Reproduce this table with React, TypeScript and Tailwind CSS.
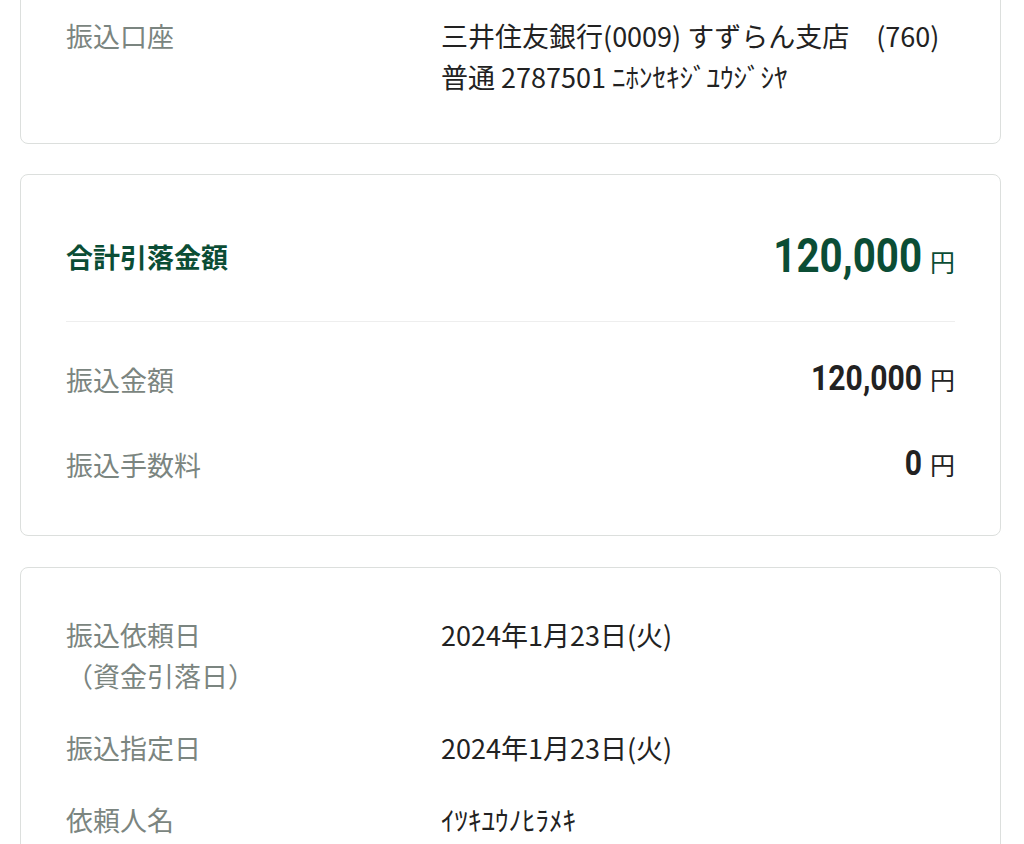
const jp = "font-['Noto_Sans_CJK_JP','Noto_Sans',sans-serif]";

function Card({ children, className = "" }: { children: React.ReactNode; className?: string }) {
  return (
    <section className={`rounded-lg border border-[#dcdfdd] bg-white px-[45px] ${className}`}>
      {children}
    </section>
  );
}

function Row({ label, children, className = "" }: { label: React.ReactNode; children: React.ReactNode; className?: string }) {
  return (
    <div className={`grid grid-cols-[375px_1fr] ${className}`}>
      <div className="text-[#7b8580]">{label}</div>
      <div className="text-[#222]">{children}</div>
    </div>
  );
}

function Amount({ value }: { value: string }) {
  return (
    <div className="flex items-baseline justify-end">
      <span className="inline-block origin-right scale-x-[0.86] font-['Roboto',sans-serif] text-[35px] font-bold leading-[41px] text-[#222]">
        {value}
      </span>
      <span className="ml-[8px] text-[25px] text-[#222]">円</span>
    </div>
  );
}

export default function App() {
  return (
    <div className={`min-h-screen bg-white pl-5 pr-[23px] text-[27px] leading-[41px] ${jp}`}>
      <div className="flex flex-col gap-[30px]">
        <Card className="-mt-[30px] pt-[44px] pb-[46px]">
          <Row label="振込口座">
            <div>三井住友銀行(0009) すずらん支店　(760)</div>
            <div>普通 2787501 ﾆﾎﾝｾｷｼﾞﾕｳｼﾞｼﾔ</div>
          </Row>
        </Card>

        <Card className="pt-[48px] pb-[50px]">
          <div className="flex h-[66px] items-center justify-between">
            <div className="font-bold text-[#0b4d35]">合計引落金額</div>
            <div className="flex items-baseline">
              <span className="inline-block origin-right scale-x-[0.84] font-['Roboto',sans-serif] text-[48px] font-bold leading-[60px] text-[#0b4d35]">
                120,000
              </span>
              <span className="ml-[8px] text-[25px] text-[#0b4d35]">円</span>
            </div>
          </div>
          <div className="mt-[32px] border-t border-[#eeeeee]" />
          <div className="mt-[36px] flex flex-col gap-[43px]">
            <div className="flex items-center justify-between">
              <div className="text-[#7b8580]">振込金額</div>
              <Amount value="120,000" />
            </div>
            <div className="flex items-center justify-between">
              <div className="text-[#7b8580]">振込手数料</div>
              <Amount value="0" />
            </div>
          </div>
        </Card>

        <Card className="mt-px pt-[46px] pb-[48px]">
          <div className="flex flex-col gap-[31px]">
            <Row label={<><div>振込依頼日</div><div>（資金引落日）</div></>}>
              2024年1月23日(火)
            </Row>
            <Row label="振込指定日">2024年1月23日(火)</Row>
            <Row label="依頼人名">ｲﾂｷﾕｳﾉﾋﾗﾒｷ</Row>
          </div>
        </Card>
      </div>
    </div>
  );
}
